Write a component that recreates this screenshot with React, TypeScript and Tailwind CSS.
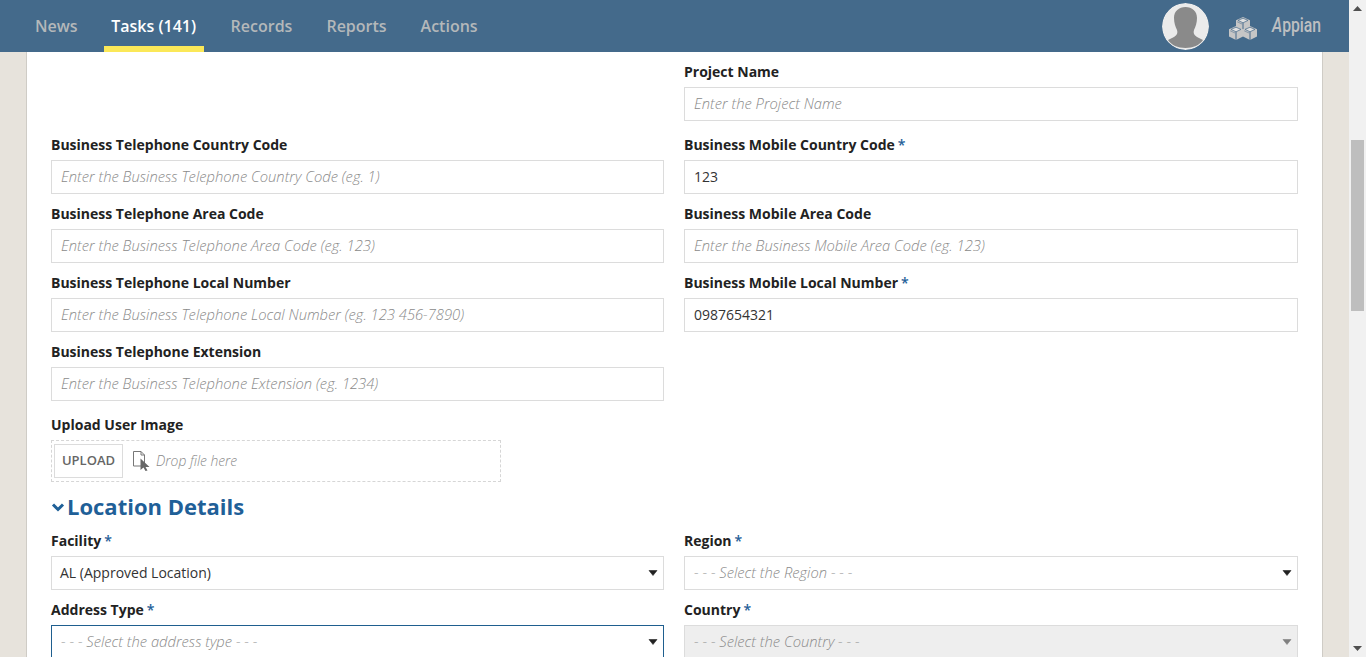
import React from "react";

function Label({ text, req }: { text: string; req?: boolean }) {
  return (
    <div className="h-[20px] leading-[20px] text-[14px] font-bold text-[#222222] whitespace-nowrap">
      {text}
      {req && <span className="text-[#1f6098] ml-[3px] font-semibold">*</span>}
    </div>
  );
}

function Caret({ muted }: { muted?: boolean }) {
  return (
    <svg width="10" height="6" viewBox="0 0 10 6" className="shrink-0">
      <path d="M1 0.5h8L5 5.5z" fill={muted ? "#808080" : "#222222"} stroke={muted ? "#808080" : "#222222"} strokeWidth="0.6" />
    </svg>
  );
}

function Field({ label, req, value, placeholder, select, focused, disabled }: { label: string; req?: boolean; value?: string; placeholder?: string; select?: boolean; focused?: boolean; disabled?: boolean }) {
  const border = focused ? "border-[#1f5f8f]" : "border-[#dcdcdc]";
  const bg = disabled ? "bg-[#eeeeee]" : "bg-white";
  return (
    <div className="flex flex-col gap-[5px]">
      <Label text={label} req={req} />
      <div className={`h-[34px] shrink-0 border ${border} ${bg} flex items-center justify-between ${value && select ? "pl-[8px]" : "pl-[9px]"} pr-[5px] text-[14px] whitespace-nowrap`}>
        {value ? <span className="text-[#333333] pb-[2px]">{value}</span> : <span className="italic font-light text-[#8a8a8a] text-[14.75px] pb-[2px]">{placeholder}</span>}
        {select && <Caret muted={disabled} />}
      </div>
    </div>
  );
}

function Cubes() {
  const cube = (x: number, y: number) => (
    <g transform={`translate(${x} ${y})`}>
      <path d="M7 0l7 3.200v7.300L7 14l-7-3.500V3.200z" fill="#c6c6c6" />
      <path d="M2 3.400L7 1.200l5 2.200L7 5.800z" fill="#e0e0e0" stroke="#44698a" strokeWidth="0.7" />
      <path d="M7 6v8" stroke="#44698a" strokeWidth="1" />
      <path d="M1.200 4.800L6 7" stroke="#44698a" strokeWidth="0.5" />
    </g>
  );
  return (
    <svg width="28" height="23" viewBox="0 0 28 23" className="shrink-0">
      {cube(7, 0)}
      {cube(0, 9)}
      {cube(14, 9)}
    </svg>
  );
}

function Avatar() {
  return (
    <svg width="47" height="47" viewBox="0 0 47 47" className="shrink-0 rounded-full">
      <circle cx="23.5" cy="23.5" r="23.5" fill="#ebebeb" />
      <path d="M23.500 4C30 4 35 8 35 15c0 5-1.500 9-3 12-1 3 0 5 3 7l6 3c-3 5-10 8-17.500 8S9 42 6 37l6-3c3-2 4-4 3-7-1.500-3-3-7-3-12C12 8 17 4 23.500 4z" fill="#8a8a8a" />
    </svg>
  );
}

function FileCursor() {
  return (
    <svg width="17" height="20" viewBox="0 0 17 20" className="shrink-0">
      <path d="M0.5 0.5h7.500l3.500 3.500v11h-11z" fill="#ffffff" stroke="#777777" />
      <path d="M8 0.500v3.500h3.500" fill="none" stroke="#777777" />
      <path d="M7.500 7.500l9 8.500h-4l2 3.500-2 .5-2-3.500-3 2.500z" fill="#666666" />
    </svg>
  );
}

export default function App() {
  return (
    <div className="h-[657px] w-[1366px] overflow-hidden flex bg-[#e7e3dc] font-['Open_Sans','Noto_Sans',sans-serif]">
      <div className="w-[1349px] flex flex-col">
        <header className="h-[52px] shrink-0 bg-[#446a8b] flex items-stretch justify-between">
          <nav className="flex pl-[18px] text-[16px] font-semibold text-[#b4b8ba]">
            <div className="px-[17px] flex items-center h-[52px] pb-[1px]">News</div>
            <div className="w-[100px] mx-[9px] flex items-center justify-center h-[52px] pt-[5px] text-white border-b-[6px] border-[#fbe858]">
              <span className="whitespace-nowrap">Tasks (141)</span>
            </div>
            <div className="ml-[1px] px-[17px] flex items-center h-[52px] pb-[1px]">Records</div>
            <div className="px-[17px] flex items-center h-[52px] pb-[1px]">Reports</div>
            <div className="px-[17px] flex items-center h-[52px] pb-[1px]">Actions</div>
          </nav>
          <div className="flex items-center pr-[27px] pt-[1px]">
            <Avatar />
            <div className="ml-[20px] mt-[3px]"><Cubes /></div>
            <div className="ml-[15px] w-[50px] h-[24px] -mt-[3px] text-[21px] leading-[24px] font-medium text-[#bdbfc1] font-['Roboto',sans-serif] scale-x-[0.75] origin-left whitespace-nowrap"><span className="italic">A</span>ppian</div>
          </div>
        </header>
        <main className="ml-[26px] w-[1297px] border-l border-r border-[#cfccc6] bg-white flex-1 overflow-hidden px-[24px] pt-[10px]">
          <div className="grid grid-cols-[613px_614px] gap-x-[20px]">
            <div />
            <Field label="Project Name" placeholder="Enter the Project Name" />
          </div>
          <div className="grid grid-cols-[613px_614px] gap-x-[20px] gap-y-[10px] mt-[14px]">
            <Field label="Business Telephone Country Code" placeholder="Enter the Business Telephone Country Code (eg. 1)" />
            <Field label="Business Mobile Country Code" req value="123" />
            <Field label="Business Telephone Area Code" placeholder="Enter the Business Telephone Area Code (eg. 123)" />
            <Field label="Business Mobile Area Code" placeholder="Enter the Business Mobile Area Code (eg. 123)" />
            <Field label="Business Telephone Local Number" placeholder="Enter the Business Telephone Local Number (eg. 123 456-7890)" />
            <Field label="Business Mobile Local Number" req value="0987654321" />
            <Field label="Business Telephone Extension" placeholder="Enter the Business Telephone Extension (eg. 1234)" />
          </div>
          <div className="mt-[14px] flex flex-col gap-[5px]">
            <Label text="Upload User Image" />
            <div className="w-[450px] h-[42px] border border-dashed border-[#d6d6d6] flex items-center pl-[2px]">
              <div className="w-[69px] h-[34px] border border-[#dcdcdc] flex items-center justify-center text-[13px] font-semibold text-[#666666]">UPLOAD</div>
              <div className="ml-[10px]"><FileCursor /></div>
              <span className="ml-[6px] text-[13.85px] italic font-light text-[#8a8a8a] whitespace-nowrap">Drop file here</span>
            </div>
          </div>
          <div className="mt-[7px] h-[34px] flex items-center">
            <svg width="14" height="9" viewBox="0 0 14 9" className="mr-[2px] mt-[3px] shrink-0">
              <path d="M2 1.500l5 5 5-5" fill="none" stroke="#1f6098" strokeWidth="3" />
            </svg>
            <h2 className="text-[22px] font-bold text-[#1f6098] leading-[34px]">Location Details</h2>
          </div>
          <div className="grid grid-cols-[613px_614px] gap-x-[20px] gap-y-[10px] mt-[8px]">
            <Field label="Facility" req value="AL (Approved Location)" select />
            <Field label="Region" req placeholder="- - - Select the Region - - -" select />
            <Field label="Address Type" req placeholder="- - - Select the address type - - -" select focused />
            <Field label="Country" req placeholder="- - - Select the Country - - -" select disabled />
          </div>
        </main>
      </div>
      <div className="w-[17px] h-[657px] bg-[#f1f1f1] flex flex-col items-center justify-between shrink-0 relative">
        <svg width="9" height="5" viewBox="0 0 9 5" className="mt-[6px]"><path d="M4.500 0L9 5H0z" fill="#505050" /></svg>
        <div className="absolute left-[2px] top-[140px] w-[13px] h-[171px] bg-[#bebebe]" />
        <svg width="9" height="5" viewBox="0 0 9 5" className="mb-[6px]"><path d="M0 0h9L4.500 5z" fill="#505050" /></svg>
      </div>
    </div>
  );
}
